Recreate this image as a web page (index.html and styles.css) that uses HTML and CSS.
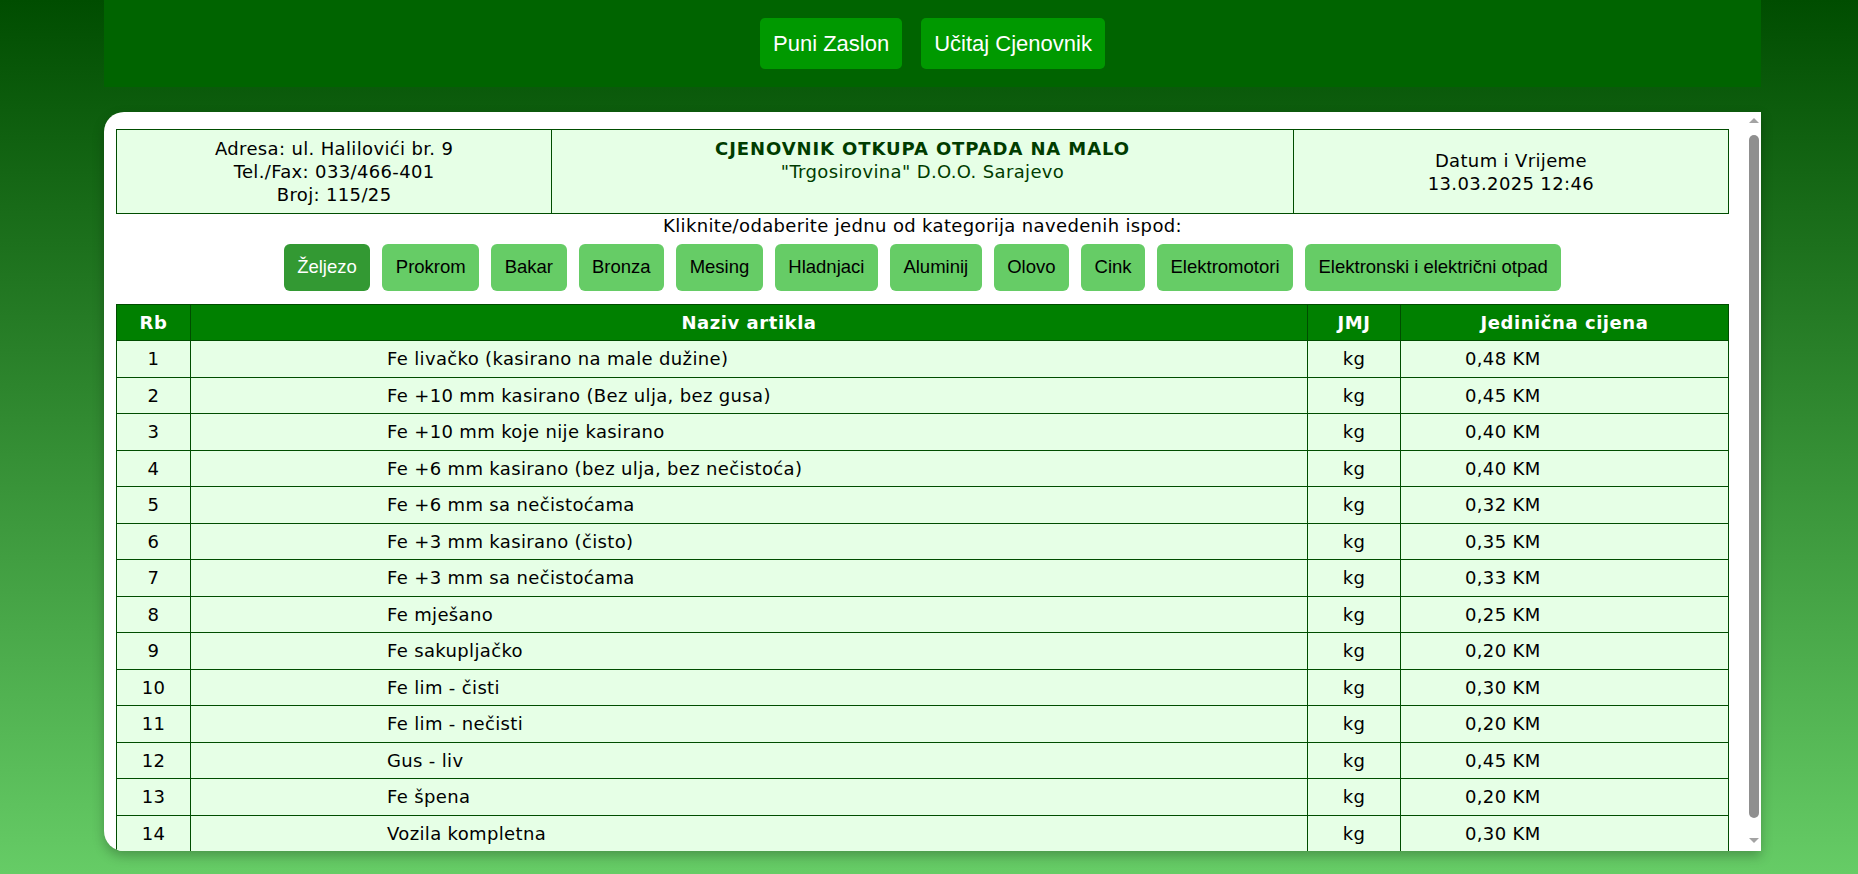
FILE: index.html
```html
<!DOCTYPE html>
<html lang="bs">
<head>
<meta charset="utf-8">
<title>Cjenovnik</title>
<link rel="stylesheet" href="styles.css">
</head>
<body>
<div class="wrap">
  <header class="topbar">
    <button class="top-btn">Puni Zaslon</button>
    <button class="top-btn">Učitaj Cjenovnik</button>
  </header>
  <main class="panel">
    <div class="panel-body">
      <table class="info">
        <colgroup><col class="c-side"><col class="c-mid"><col class="c-side"></colgroup>
        <tr>
          <td>Adresa: ul. Halilovići br. 9<br>Tel./Fax: 033/466-401<br>Broj: 115/25</td>
          <td class="mid"><strong class="title">CJENOVNIK OTKUPA OTPADA NA MALO</strong><br><span class="firm">"Trgosirovina" D.O.O. Sarajevo</span></td>
          <td>Datum i Vrijeme<br>13.03.2025 12:46</td>
        </tr>
      </table>
      <p class="hint">Kliknite/odaberite jednu od kategorija navedenih ispod:</p>
      <nav class="cats">
        <button class="cat active">Željezo</button>
        <button class="cat">Prokrom</button>
        <button class="cat">Bakar</button>
        <button class="cat">Bronza</button>
        <button class="cat">Mesing</button>
        <button class="cat">Hladnjaci</button>
        <button class="cat">Aluminij</button>
        <button class="cat">Olovo</button>
        <button class="cat">Cink</button>
        <button class="cat">Elektromotori</button>
        <button class="cat">Elektronski i električni otpad</button>
      </nav>
      <table class="prices">
        <colgroup><col class="c-rb"><col class="c-name"><col class="c-jmj"><col class="c-price"></colgroup>
        <thead>
          <tr><th>Rb</th><th>Naziv artikla</th><th>JMJ</th><th>Jedinična cijena</th></tr>
        </thead>
        <tbody>
          <tr><td>1</td><td class="name">Fe livačko (kasirano na male dužine)</td><td>kg</td><td class="price">0,48 KM</td></tr>
          <tr><td>2</td><td class="name">Fe +10 mm kasirano (Bez ulja, bez gusa)</td><td>kg</td><td class="price">0,45 KM</td></tr>
          <tr><td>3</td><td class="name">Fe +10 mm koje nije kasirano</td><td>kg</td><td class="price">0,40 KM</td></tr>
          <tr><td>4</td><td class="name">Fe +6 mm kasirano (bez ulja, bez nečistoća)</td><td>kg</td><td class="price">0,40 KM</td></tr>
          <tr><td>5</td><td class="name">Fe +6 mm sa nečistoćama</td><td>kg</td><td class="price">0,32 KM</td></tr>
          <tr><td>6</td><td class="name">Fe +3 mm kasirano (čisto)</td><td>kg</td><td class="price">0,35 KM</td></tr>
          <tr><td>7</td><td class="name">Fe +3 mm sa nečistoćama</td><td>kg</td><td class="price">0,33 KM</td></tr>
          <tr><td>8</td><td class="name">Fe mješano</td><td>kg</td><td class="price">0,25 KM</td></tr>
          <tr><td>9</td><td class="name">Fe sakupljačko</td><td>kg</td><td class="price">0,20 KM</td></tr>
          <tr><td>10</td><td class="name">Fe lim - čisti</td><td>kg</td><td class="price">0,30 KM</td></tr>
          <tr><td>11</td><td class="name">Fe lim - nečisti</td><td>kg</td><td class="price">0,20 KM</td></tr>
          <tr><td>12</td><td class="name">Gus - liv</td><td>kg</td><td class="price">0,45 KM</td></tr>
          <tr><td>13</td><td class="name">Fe špena</td><td>kg</td><td class="price">0,20 KM</td></tr>
          <tr><td>14</td><td class="name">Vozila kompletna</td><td>kg</td><td class="price">0,30 KM</td></tr>
        </tbody>
      </table>
    </div>
    <div class="scrollbar" aria-hidden="true">
      <span class="arrow up"></span>
      <span class="thumb"></span>
      <span class="arrow down"></span>
    </div>
  </main>
</div>
</body>
</html>
```
FILE: styles.css
```css
html, body {
  margin: 0;
  padding: 0;
}
body {
  min-height: 874px;
  background: linear-gradient(to bottom, #004d00 0%, #66cc66 100%);
  font-family: "DejaVu Sans", Verdana, sans-serif;
  color: #000;
  overflow: hidden;
}
.wrap {
  width: 1657px;
  margin-left: 104px;
}
.topbar {
  height: 87px;
  background: #006400;
  display: flex;
  justify-content: center;
  align-items: center;
  gap: 19px;
}
.top-btn {
  font-family: "Liberation Sans", Arial, sans-serif;
  font-size: 22px;
  color: #fff;
  background: #009900;
  border: none;
  border-radius: 5px;
  padding: 13px 13px;
  line-height: 25px;
  cursor: pointer;
}
.panel {
  display: flex;
  margin-top: 25px;
  height: 739px;
  overflow: hidden;
  background: #fff;
  border-radius: 20px 0 0 20px;
  box-shadow: 0 5px 12px rgba(0, 0, 0, 0.25);
}
.panel-body {
  flex: 1;
  min-width: 0;
  overflow: hidden;
  padding: 17px 17px 27px 12px;
}
.scrollbar {
  width: 15px;
  flex: none;
  display: flex;
  flex-direction: column;
  align-items: center;
  background: #fff;
}
.arrow {
  width: 0;
  height: 0;
  border-left: 5px solid transparent;
  border-right: 5px solid transparent;
}
.arrow.up {
  margin-top: 6px;
  border-bottom: 5px solid #a3a3a3;
}
.arrow.down {
  margin-bottom: 8px;
  border-top: 5px solid #a3a3a3;
}
.thumb {
  width: 10px;
  margin: 12px 0 20px;
  flex: 1;
  background: #8f8f8f;
  border-radius: 5px;
}
table {
  width: 100%;
  border-collapse: collapse;
  table-layout: fixed;
  font-size: 18px;
  letter-spacing: 0.35px;
}
td, th {
  border: 1px solid #004d00;
  background: #e6ffe6;
}
.info td {
  padding: 7px 6px;
  text-align: center;
  vertical-align: middle;
  line-height: 23px;
}
.info td.mid {
  vertical-align: top;
}
.c-side { width: 27%; }
.c-mid { width: 46%; }
.title {
  color: #003c00;
  font-weight: bold;
  letter-spacing: 0.9px;
}
.firm {
  color: #003c00;
}
.hint {
  margin: 0;
  text-align: center;
  font-size: 18px;
  letter-spacing: 0.35px;
  line-height: 23px;
}
.cats {
  display: flex;
  justify-content: center;
  gap: 12px;
  margin: 7px 0 13px;
}
.cat {
  font-family: "Liberation Sans", Arial, sans-serif;
  font-size: 18.5px;
  line-height: 20.7px;
  padding: 13px 13.5px;
  border: none;
  border-radius: 6px;
  background: #66cc66;
  color: #000;
  cursor: pointer;
}
.cat.active {
  background: #339933;
  color: #fff;
}
.c-rb { width: 74px; }
.c-jmj { width: 93px; }
.c-price { width: 328px; }
.prices th, .prices td {
  padding: 7px 4px;
  line-height: 21.5px;
  text-align: center;
  white-space: nowrap;
}
.prices th {
  background: #008000;
  color: #fff;
  font-weight: bold;
  letter-spacing: 0.55px;
}
.prices td.name {
  text-align: left;
  padding-left: 196px;
}
.prices td.price {
  text-align: left;
  padding-left: 64px;
}
```
